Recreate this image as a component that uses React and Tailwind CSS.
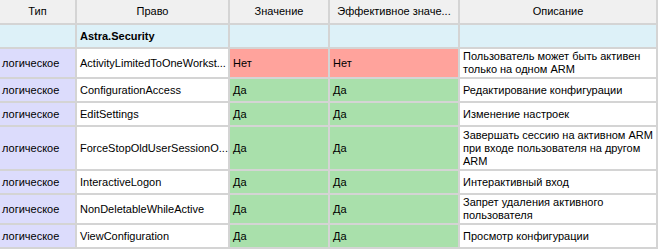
import React from "react";

const rows = [
  { name: "ActivityLimitedToOneWorkst...", val: false, desc: ["Пользователь может быть активен", "только на одном ARM"], h: "h-[28px]" },
  { name: "ConfigurationAccess", val: true, desc: ["Редактирование конфигурации"], h: "h-[22px]" },
  { name: "EditSettings", val: true, desc: ["Изменение настроек"], h: "h-[22px]" },
  { name: "ForceStopOldUserSessionO...", val: true, desc: ["Завершать сессию на активном ARM", "при входе пользователя на другом", "ARM"], h: "h-[42px]" },
  { name: "InteractiveLogon", val: true, desc: ["Интерактивный вход"], h: "h-[22px]" },
  { name: "NonDeletableWhileActive", val: true, desc: ["Запрет удаления активного", "пользователя"], h: "h-[28px]" },
  { name: "ViewConfiguration", val: true, desc: ["Просмотр конфигурации"], h: "h-[22px]" },
];

export default function App() {
  return (
    <div className="w-[660px] h-[250px] bg-white" style={{ fontFamily: '"Liberation Sans", Arial, sans-serif' }}>
      <div className="w-[658px] grid grid-cols-[75px_151px_98px_128px_196px] gap-[2px] bg-[#d4d4d4] pr-[2px] pb-[2px] text-[11px] text-black leading-[13px]">
        {["Тип", "Право", "Значение", "Эффективное значе...", "Описание"].map((t) => (
          <div key={t} className="h-[23px] bg-[#f0f0f0] flex items-center justify-center whitespace-nowrap">{t}</div>
        ))}
        <div className="h-[22px] bg-[#ddf1f8]" />
        <div className="h-[22px] bg-[#ddf1f8] flex items-center pl-[3px] font-bold">Astra.Security</div>
        <div className="h-[22px] bg-[#ddf1f8]" />
        <div className="h-[22px] bg-[#ddf1f8]" />
        <div className="h-[22px] bg-[#ddf1f8]" />
        {rows.map((r) => (
          <React.Fragment key={r.name}>
            <div className={`${r.h} bg-[#dcdcfc] flex items-center pl-[2px] whitespace-nowrap`}>логическое</div>
            <div className={`${r.h} bg-white flex items-center pl-[3px] whitespace-nowrap`}>{r.name}</div>
            <div className={`${r.h} ${r.val ? "bg-[#a9e0ab]" : "bg-[#ffa39c]"} flex items-center pl-[3px]`}>{r.val ? "Да" : "Нет"}</div>
            <div className={`${r.h} ${r.val ? "bg-[#a9e0ab]" : "bg-[#ffa39c]"} flex items-center pl-[3px]`}>{r.val ? "Да" : "Нет"}</div>
            <div className={`${r.h} bg-white flex flex-col justify-center pl-[3px] whitespace-nowrap overflow-hidden`}>
              {r.desc.map((l) => (
                <span key={l}>{l}</span>
              ))}
            </div>
          </React.Fragment>
        ))}
      </div>
    </div>
  );
}
